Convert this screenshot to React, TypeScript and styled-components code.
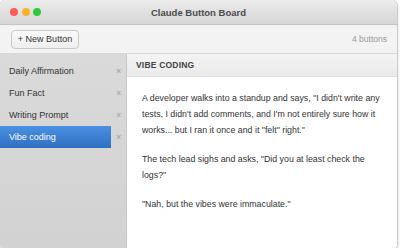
import React from "react";
import styled, { createGlobalStyle } from "styled-components";

const Global = createGlobalStyle`
  html, body { margin: 0; padding: 0; background: #ffffff; }
  body { font-family: "Liberation Sans", Arial, sans-serif; }
`;

const Window = styled.div`
  width: 397px;
  height: 248px;
  display: flex;
  flex-direction: column;
  border-radius: 6px 6px 3px 3px;
  overflow: hidden;
  box-shadow: 0 0 0 1px rgba(0,0,0,0.12), 1px 1px 3px rgba(0,0,0,0.15);
  background: #fff;
`;

const TitleBar = styled.div`
  height: 24px;
  flex: none;
  position: relative;
  display: flex;
  align-items: center;
  justify-content: center;
  background: linear-gradient(#ebebeb, #d6d6d6);
  border-bottom: 1px solid #c4c4c4;
`;

const Lights = styled.div`
  position: absolute;
  left: 10px;
  top: 8px;
  display: flex;
  gap: 3.5px;
`;

const Light = styled.span<{ $c: string }>`
  width: 8px;
  height: 8px;
  border-radius: 50%;
  background: ${(p) => p.$c};
`;

const Title = styled.div`
  font-size: 9.5px;
  font-weight: bold;
  color: #4a4a4a;
`;

const Toolbar = styled.div`
  height: 28px;
  flex: none;
  display: flex;
  align-items: center;
  justify-content: space-between;
  padding: 0 10px 0 11px;
  background: #f3f3f3;
  border-bottom: 1px solid #d8d8d8;
`;

const NewButton = styled.button`
  height: 19px;
  width: 68px;
  padding: 0;
  border: 1px solid #c8c8c8;
  border-radius: 4px;
  background: linear-gradient(#fafafa, #eeeeee);
  font-family: inherit;
  font-size: 9px;
  color: #333;
`;

const Count = styled.div`
  font-size: 8.5px;
  color: #999;
`;

const Body = styled.div`
  flex: 1;
  display: flex;
  min-height: 0;
`;

const Sidebar = styled.div`
  width: 127px;
  flex: none;
  padding-top: 6px;
  background: linear-gradient(#dadada, #d2d2d2);
  border-right: 1px solid #c8c8c8;
  box-sizing: border-box;
`;

const Row = styled.div`
  display: flex;
  align-items: center;
  height: 22px;
`;

const Item = styled.div<{ $active?: boolean }>`
  width: 112px;
  height: 100%;
  display: flex;
  align-items: center;
  padding-left: 9px;
  box-sizing: border-box;
  font-size: 9px;
  color: ${(p) => (p.$active ? "#fff" : "#333")};
  background: ${(p) => (p.$active ? "linear-gradient(#4a90e0, #2e6fc4)" : "transparent")};
`;

const Close = styled.span`
  width: 15px;
  text-align: center;
  font-size: 9px;
  color: #a0a0a0;
`;

const Main = styled.div`
  flex: 1;
  display: flex;
  flex-direction: column;
  background: #fff;
`;

const Header = styled.div`
  height: 22px;
  flex: none;
  display: flex;
  align-items: center;
  padding-left: 9px;
  background: linear-gradient(#f4f4f4, #eaeaea);
  border-bottom: 1px solid #dedede;
  font-size: 8.5px;
  font-weight: bold;
  color: #444;
  letter-spacing: 0.2px;
`;

const Content = styled.div`
  padding: 13px 15px;
  font-size: 8.8px;
  line-height: 16px;
  color: #333;
  p { margin: 0 0 13px; }
`;

const items = ["Daily Affirmation", "Fun Fact", "Writing Prompt", "Vibe coding"];

export default function App() {
  return (
    <>
      <Global />
      <Window>
        <TitleBar>
          <Lights>
            <Light $c="#fc5b57" />
            <Light $c="#fbb32f" />
            <Light $c="#2dc840" />
          </Lights>
          <Title>Claude Button Board</Title>
        </TitleBar>
        <Toolbar>
          <NewButton>+ New Button</NewButton>
          <Count>4 buttons</Count>
        </Toolbar>
        <Body>
          <Sidebar>
            {items.map((t, i) => (
              <Row key={t}>
                <Item $active={i === 3}>{t}</Item>
                <Close>×</Close>
              </Row>
            ))}
          </Sidebar>
          <Main>
            <Header>VIBE CODING</Header>
            <Content>
              <p>
                A developer walks into a standup and says, "I didn't write any tests, I didn't add comments, and I'm not entirely sure how it works... but I ran it once and it "felt" right."
              </p>
              <p>The tech lead sighs and asks, "Did you at least check the logs?"</p>
              <p>"Nah, but the vibes were immaculate."</p>
            </Content>
          </Main>
        </Body>
      </Window>
    </>
  );
}
